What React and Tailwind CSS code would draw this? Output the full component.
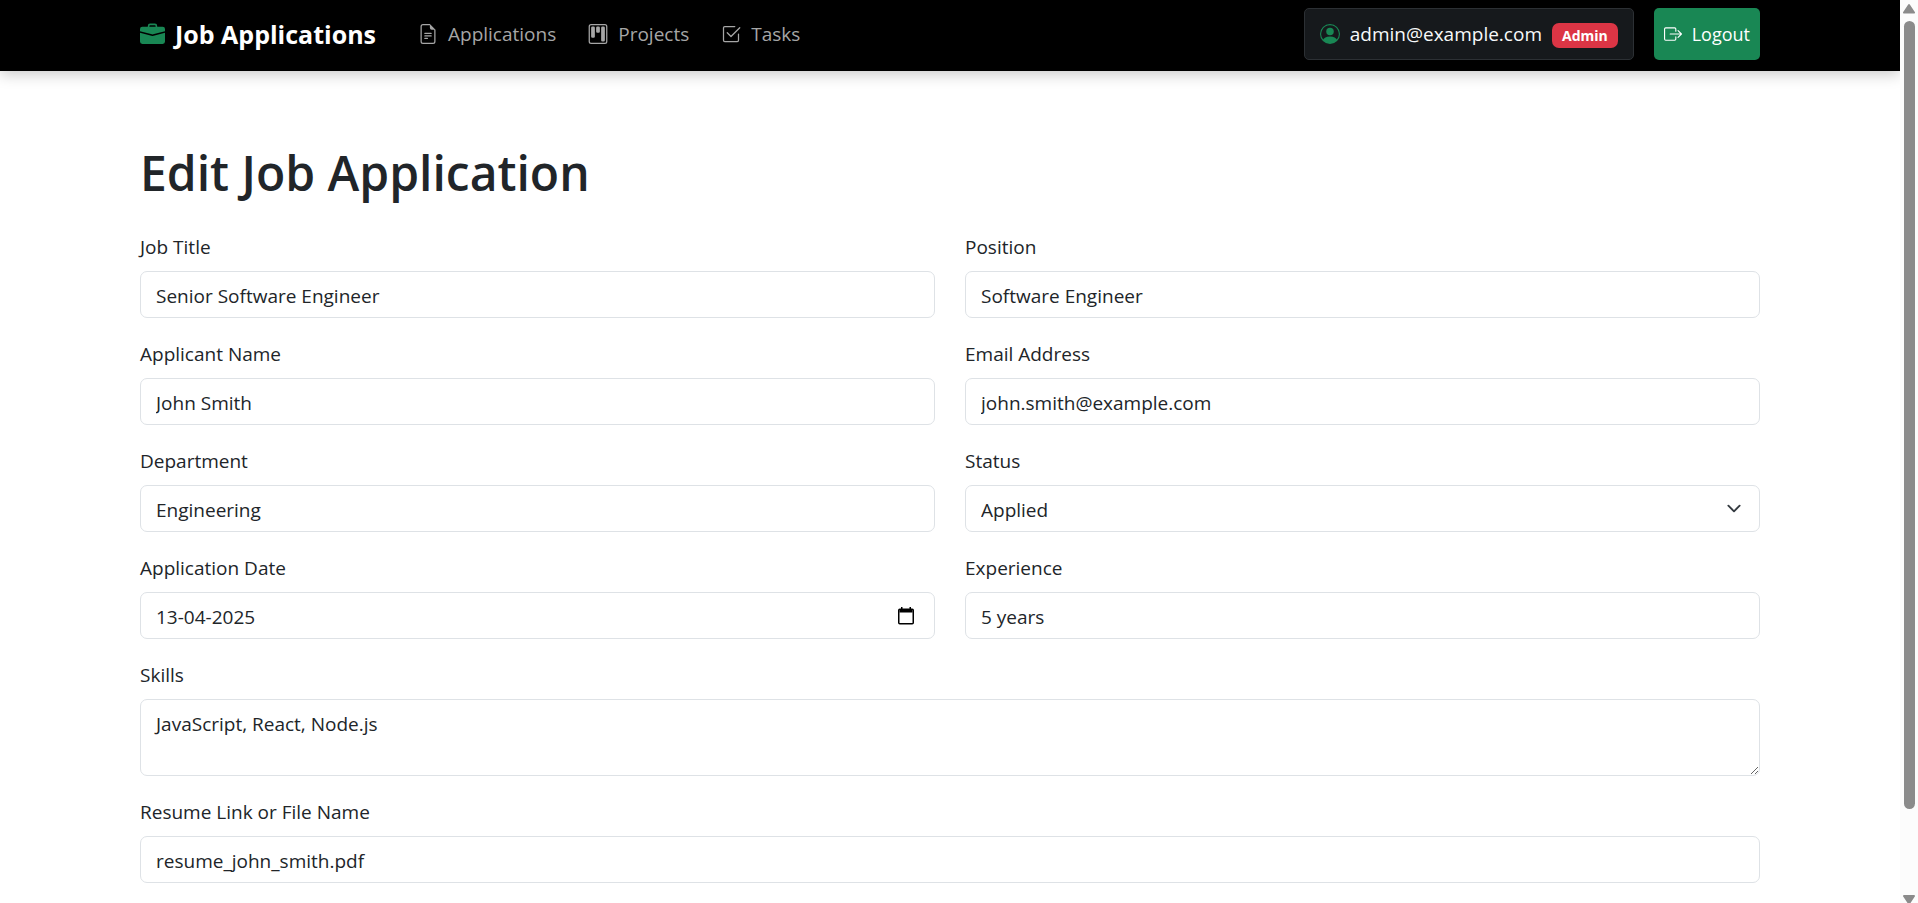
import {
  BsBoxArrowRight,
  BsBriefcaseFill,
  BsCheck2Square,
  BsFileEarmarkText,
  BsKanban,
  BsPersonCircle,
} from "react-icons/bs";

const control =
  "block h-[47px] w-full rounded-[7px] border border-[#dee2e6] bg-white px-[15px] pt-0.5 text-[19px] leading-[30px] text-[#212529] outline-none focus:border-[#86b7fe]";

function Field({ id, label, wide, children }) {
  return (
    <div className={wide ? "col-span-2" : ""}>
      <label htmlFor={id} className="mb-2 block w-fit leading-8">
        {label}
      </label>
      {children}
    </div>
  );
}

function TextField({ id, label, value, type = "text", wide }) {
  return (
    <Field id={id} label={label} wide={wide}>
      <input id={id} name={id} type={type} defaultValue={value} className={control} />
    </Field>
  );
}

function NavLink({ icon: Icon, children }) {
  return (
    <a href="#" className="flex items-center gap-[10px] text-[#a6a6a6] hover:text-white">
      <Icon className="size-5" aria-hidden="true" />
      {children}
    </a>
  );
}

function Navbar() {
  return (
    <header className="relative bg-black shadow-[0_3px_14px_rgba(0,0,0,0.22)]">
      <div className="mx-auto flex h-[71px] max-w-[1650px] items-center px-[15px] pb-[3px]">
        <a href="#" className="flex items-center gap-[10px] text-[25px] font-bold text-white">
          <BsBriefcaseFill className="size-[25px] text-[#198754]" aria-hidden="true" />
          Job Applications
        </a>
        <nav className="ml-[42px] flex items-center gap-8">
          <NavLink icon={BsFileEarmarkText}>Applications</NavLink>
          <NavLink icon={BsKanban}>Projects</NavLink>
          <NavLink icon={BsCheck2Square}>Tasks</NavLink>
        </nav>
        <div className="ml-auto flex items-center gap-5">
          <div className="flex h-[52px] items-center rounded-[5px] border border-[#2c3034] bg-[#16191c] px-[15px] text-[#f8f9fa]">
            <BsPersonCircle className="mr-[10px] size-5 text-[#198754]" aria-hidden="true" />
            admin@example.com
            <span className="ml-[10px] mt-0.5 rounded-[7px] bg-[#dc3545] px-[10px] text-sm leading-[25px] font-bold text-white">
              Admin
            </span>
          </div>
          <button
            type="button"
            className="flex h-[52px] items-center gap-[10px] rounded-[5px] bg-[#198754] px-[10px] text-lg text-white hover:bg-[#157347]"
          >
            <BsBoxArrowRight className="size-[18px]" aria-hidden="true" />
            Logout
          </button>
        </div>
      </div>
    </header>
  );
}

function Scrollbar() {
  return (
    <div className="flex h-full w-[18px] shrink-0 flex-col items-center bg-[#fcfcfc] text-[#8b8b8b]" aria-hidden="true">
      <svg className="mt-1 h-[10px] w-3 shrink-0" viewBox="0 0 12 10" fill="currentColor">
        <path d="M5.2.6a1 1 0 0 1 1.6 0l5 7.400a1 1 0 0 1-.8 1.600H1a1 1 0 0 1-.8-1.600z" />
      </svg>
      <div className="mt-[7px] mb-[86px] w-[11px] grow rounded-full bg-[#8b8b8b]" />
      <svg className="h-2 w-3 shrink-0" viewBox="0 0 12 8" fill="currentColor">
        <path d="M1 0h10a1 1 0 0 1 .8 1.600L7.500 8h-3L.2 1.600A1 1 0 0 1 1 0z" />
      </svg>
    </div>
  );
}

export default function App() {
  return (
    <div className="flex h-screen overflow-hidden bg-white font-['Open_Sans','Noto_Sans',sans-serif] text-[19px] leading-[30px] text-[#212529]">
      <div className="h-full min-w-0 grow overflow-hidden">
        <Navbar />
        <main className="mx-auto max-w-[1650px] px-[15px] pt-[72px]">
          <h1 className="mb-7 text-5xl leading-[60px] font-semibold">Edit Job Application</h1>
          <form className="grid grid-cols-2 gap-x-[30px] gap-y-5">
            <TextField id="jobTitle" label="Job Title" value="Senior Software Engineer" />
            <TextField id="position" label="Position" value="Software Engineer" />
            <TextField id="applicantName" label="Applicant Name" value="John Smith" />
            <TextField id="email" label="Email Address" type="email" value="john.smith@example.com" />
            <TextField id="department" label="Department" value="Engineering" />
            <Field id="status" label="Status">
              <div className="relative">
                <select id="status" name="status" defaultValue="Applied" className={`${control} appearance-none`}>
                  <option>Applied</option>
                  <option>Interview</option>
                  <option>Offered</option>
                  <option>Rejected</option>
                </select>
                <svg
                  className="pointer-events-none absolute inset-y-0 right-4 my-auto h-[15px] w-5"
                  viewBox="0 0 16 16"
                  fill="none"
                  aria-hidden="true"
                >
                  <path d="m2 5 6 6 6-6" stroke="#343a40" strokeWidth="2" strokeLinecap="round" strokeLinejoin="round" />
                </svg>
              </div>
            </Field>
            <Field id="applicationDate" label="Application Date">
              <div className="relative">
                <input
                  id="applicationDate"
                  name="applicationDate"
                  type="text"
                  defaultValue="13-04-2025"
                  className={control}
                />
                <button
                  type="button"
                  aria-label="Open calendar"
                  className="absolute inset-y-0 right-[19px] my-auto flex size-5 items-center justify-center"
                >
                  <svg className="h-[18px] w-4" viewBox="0 0 16 18" fill="none" aria-hidden="true">
                    <path
                      d="M1.500 2.500h13v3h-13zM3 0h1.500v2H3zM11.500 0H13v2h-1.500z"
                      fill="black"
                    />
                    <rect x="0.750" y="2.250" width="14.500" height="14.500" rx="1" stroke="black" strokeWidth="1.500" />
                  </svg>
                </button>
              </div>
            </Field>
            <TextField id="experience" label="Experience" value="5 years" />
            <Field id="skills" label="Skills" wide>
              <textarea
                id="skills"
                name="skills"
                defaultValue="JavaScript, React, Node.js"
                className="block h-[77px] w-full resize-y rounded-[7px] border border-[#dee2e6] bg-white px-[15px] pt-[9px] pb-2 text-[19px] leading-[30px] text-[#212529] outline-none focus:border-[#86b7fe]"
              />
            </Field>
            <TextField id="resume" label="Resume Link or File Name" value="resume_john_smith.pdf" wide />
          </form>
        </main>
      </div>
      <Scrollbar />
    </div>
  );
}
